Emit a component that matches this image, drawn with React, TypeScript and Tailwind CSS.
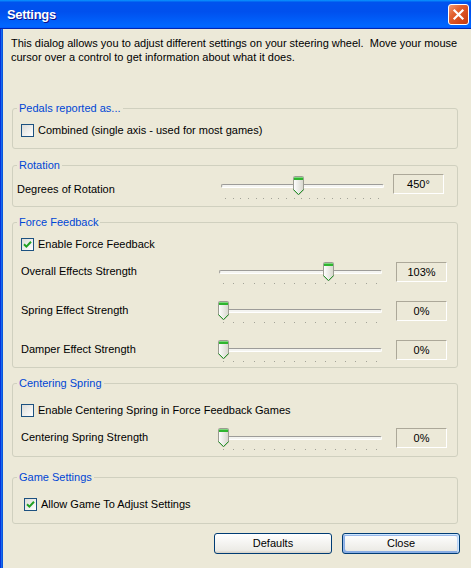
import clsx from "clsx";
import type { ReactNode } from "react";

function CheckBox({ checked }: { checked?: boolean }) {
  return (
    <span className="w-[13px] h-[13px] shrink-0 border border-[#1c5180] bg-[linear-gradient(135deg,#dcdcd7,#ffffff)] flex items-center justify-center">
      {checked && (
        <svg width="9" height="9" viewBox="0 0 9 9">
          <path d="M1 4.2 L3.4 6.6 L8 1.8" stroke="#21a121" strokeWidth="2" fill="none" />
        </svg>
      )}
    </span>
  );
}

function CheckRow({ label, checked, className }: { label: string; checked?: boolean; className?: string }) {
  return (
    <label className={clsx("flex items-center", className)}>
      <CheckBox checked={checked} />
      <span className="ml-[4px] leading-[13px]">{label}</span>
    </label>
  );
}

function Thumb({ left }: { left: number }) {
  return (
    <svg width="11" height="20" viewBox="0 0 11 20" className="absolute top-0" style={{ left }}>
      <defs>
        <linearGradient id="thumbBody" x1="0" x2="1" y1="0" y2="0">
          <stop offset="0" stopColor="#ffffff" />
          <stop offset="1" stopColor="#d6d6cc" />
        </linearGradient>
      </defs>
      <path
        d="M1.5 0.5 H9.5 Q10.5 0.5 10.5 1.5 V14 L5.5 19 L0.5 14 V1.5 Q0.5 0.5 1.5 0.5 Z"
        fill="url(#thumbBody)"
        stroke="#9c9c92"
      />
      <rect x="1" y="1" width="9" height="1" fill="#7fd67f" />
      <rect x="1" y="2" width="9" height="2" fill="#2fb52f" />
      <path d="M0.5 13.5 L5.5 18.5 L10.5 13.5" stroke="#2a9a2a" fill="none" />
    </svg>
  );
}

function Slider({ pct, ticks, tickGap = 9 }: { pct: number; ticks: number; tickGap?: number }) {
  return (
    <div className="relative w-[164px] h-[24px] shrink-0 flex flex-col">
      <div className="mt-[8px] ml-[1px] h-[4px] rounded-[2px] border-t border-l border-t-[#9d9c99] border-l-[#9d9c99] border-b border-r border-b-white border-r-white bg-[#f4f4f0]" />
      <div className="px-[5px] flex justify-between" style={{ marginTop: tickGap }}>
        {Array.from({ length: ticks }).map((_, i) => (
          <span key={i} className="w-[1px] h-[1px] bg-[#a3a398]" />
        ))}
      </div>
      <Thumb left={Math.round(pct * 153)} />
    </div>
  );
}

function ValueBox({ children, className }: { children: ReactNode; className?: string }) {
  return (
    <div
      className={clsx(
        "w-[51px] h-[20px] shrink-0 border border-t-[#aca899] border-l-[#aca899] border-b-white border-r-white flex items-center justify-center leading-[13px]",
        className,
      )}
    >
      {children}
    </div>
  );
}

function SliderRow({ label, pct, value, className }: { label: string; pct: number; value: string; className?: string }) {
  return (
    <div className={clsx("flex items-start", className)}>
      <span className="w-[205px] shrink-0 pl-[8px] pt-[3px] leading-[13px]">{label}</span>
      <Slider pct={pct} ticks={16} />
      <ValueBox className="ml-[14px]">{value}</ValueBox>
    </div>
  );
}

function GroupBox({ title, className, children }: { title: string; className?: string; children: ReactNode }) {
  return (
    <fieldset className={clsx("ml-[9px] mr-[13px] border border-[#d0d0bf] rounded-[3px]", className)}>
      <legend className="ml-[4px] px-[2px] text-[#0046d5] leading-[14px]">{title}</legend>
      {children}
    </fieldset>
  );
}

function XpButton({ children, focused }: { children: ReactNode; focused?: boolean }) {
  return (
    <button
      className={clsx(
        "w-[118px] h-[21px] border border-[#003c74] rounded-[3px] bg-[linear-gradient(180deg,#ffffff,#ecebe6_86%,#d6d0c5)] text-black leading-[13px]",
        focused &&
          "shadow-[inset_-1px_1px_#cee7ff,inset_1px_2px_#98b8ea,inset_-2px_2px_#bcd4f6,inset_1px_-1px_#89ade4,inset_2px_-2px_#89ade4]",
      )}
    >
      {children}
    </button>
  );
}

export default function App() {
  return (
    <div className="w-[471px] h-[568px] overflow-hidden flex flex-col bg-[#ece9d8] font-['Liberation_Sans',Arial,sans-serif] text-[11px] text-black">
      {/* title bar */}
      <div className="h-[29px] shrink-0 flex items-center justify-between pl-[7px] pr-[2px] bg-[linear-gradient(180deg,#0997ff,#0053ee_8%,#0050ee_40%,#0066ff_88%,#0066ff_93%,#005bff_95%,#0026b1_96%,#0026b1)]">
        <span className="text-white font-bold text-[13px] tracking-[-0.3px] [text-shadow:1px_1px_#0f1089]">Settings</span>
        <div className="w-[21px] h-[21px] rounded-[3px] border border-white bg-[linear-gradient(135deg,#f09a74_0%,#e2612f_35%,#d4481a_70%,#c23c10_100%)] flex items-center justify-center">
          <svg width="13" height="13" viewBox="0 0 13 13">
            <path d="M2.5 2.5 L10.5 10.5 M10.5 2.5 L2.5 10.5" stroke="white" strokeWidth="2.2" strokeLinecap="square" />
          </svg>
        </div>
      </div>

      <div className="flex flex-1">
        <div className="w-[3px] shrink-0 bg-[linear-gradient(90deg,#0831d9_0,#0831d9_1px,#166aee_1px,#166aee_2px,#0855dd_2px)]" />
        <div className="flex-1 flex flex-col">
          <p className="pt-[7px] pl-[8px] leading-[14px]">
            This dialog allows you to adjust different settings on your steering wheel.{"\u00a0 "}Move your mouse
            <br />
            cursor over a control to get information about what it does.
          </p>

          <GroupBox title="Pedals reported as..." className="mt-[37px] pt-[9px] pb-[11px]">
            <CheckRow label="Combined (single axis - used for most games)" className="pl-[8px]" />
          </GroupBox>

          <GroupBox title="Rotation" className="mt-[9px] pt-[2px] pb-[6px]">
            <div className="flex items-start">
              <span className="w-[207px] shrink-0 pl-[4px] pt-[9px] leading-[13px]">Degrees of Rotation</span>
              <div className="mt-[2px]">
                <Slider pct={0.48} ticks={21} tickGap={10} />
              </div>
              <ValueBox className="ml-[9px]">450°</ValueBox>
            </div>
          </GroupBox>

          <GroupBox title="Force Feedback" className="mt-[8px] pt-[9px] pb-[3px]">
            <CheckRow label="Enable Force Feedback" checked className="pl-[8px]" />
            <SliderRow label="Overall Effects Strength" pct={0.686} value="103%" className="mt-[11px]" />
            <SliderRow label="Spring Effect Strength" pct={0} value="0%" className="mt-[15px]" />
            <SliderRow label="Damper Effect Strength" pct={0} value="0%" className="mt-[15px]" />
          </GroupBox>

          <GroupBox title="Centering Spring" className="mt-[8px] pt-[14px] pb-[4px]">
            <CheckRow label="Enable Centering Spring in Force Feedback Games" className="pl-[8px]" />
            <SliderRow label="Centering Spring Strength" pct={0} value="0%" className="mt-[11px]" />
          </GroupBox>

          <GroupBox title="Game Settings" className="mt-[13px] pt-[14px] pb-[12px]">
            <CheckRow label="Allow Game To Adjust Settings" checked className="pl-[11px]" />
          </GroupBox>

          <div className="mt-[9px] mr-[11px] flex justify-end gap-[10px]">
            <XpButton>Defaults</XpButton>
            <XpButton focused>Close</XpButton>
          </div>
        </div>
      </div>
    </div>
  );
}
